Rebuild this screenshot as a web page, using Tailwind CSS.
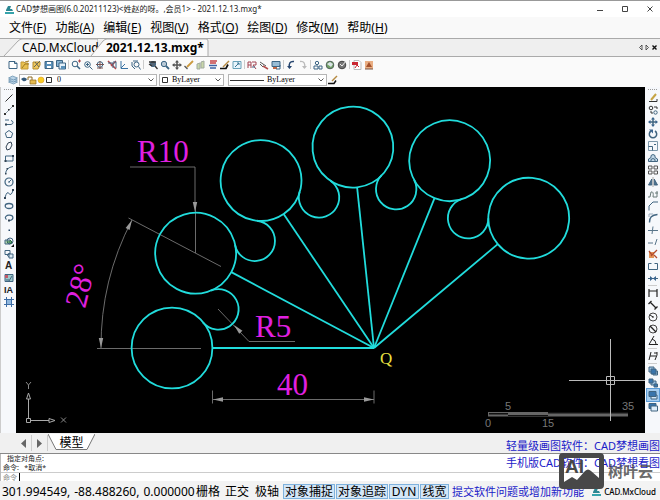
<!DOCTYPE html>
<html lang="zh-CN" class="h-full">
<head>
    <meta charset="UTF-8">
    <meta name="viewport" content="width=device-width, initial-scale=1.0">
    <title>CAD梦想画图</title>
    <script src="https://cdn.jsdelivr.net/npm/@tailwindcss/browser@4"></script>
</head>
<body class="h-full overflow-hidden bg-[#f0f0f0] font-['Noto_Sans','Noto_Sans_CJK_SC',sans-serif] text-black">
<div class="relative flex h-full flex-col">

    <!-- Title bar -->
    <header class="flex h-[17px] shrink-0 items-center border-t border-[#999] bg-white pl-[5px] pr-[4px]">
        <svg class="size-[9px]" viewBox="0 0 9 9"><path d="M1 5 3 1h3L5 4h2l1 2H1z" fill="#2c8792"/><path d="M0 7h9v2H0z" fill="#36a3ab"/></svg>
        <h1 class="ml-[2px] whitespace-nowrap text-[8px] leading-[16px] text-[#222]">CAD梦想画图(6.0.20211123)&lt;姓赵的呀。,会员1&gt; - 2021.12.13.mxg*</h1>
        <div class="ml-auto flex gap-[13px]">
            <button aria-label="最小化" class="size-3"><svg viewBox="0 0 12 12" fill="none" stroke="#444"><path d="M3 7.500h6"/></svg></button>
            <button aria-label="最大化" class="size-3"><svg viewBox="0 0 12 12" fill="none" stroke="#444"><path d="M3.500 3.500h5v5h-5z"/></svg></button>
            <button aria-label="关闭" class="size-3"><svg viewBox="0 0 12 12" fill="none" stroke="#444"><path d="m3.500 3.500 5 5m0-5-5 5"/></svg></button>
        </div>
    </header>

    <!-- Menu -->
    <nav class="flex h-[21px] shrink-0 items-center gap-[9px] bg-[#f9f9f9] pl-[9px] text-[12px] leading-[20px] whitespace-nowrap">
        <button>文件(<u>F</u>)</button>
        <button>功能(<u>A</u>)</button>
        <button>编辑(<u>E</u>)</button>
        <button>视图(<u>V</u>)</button>
        <button>格式(<u>O</u>)</button>
        <button>绘图(<u>D</u>)</button>
        <button>修改(<u>M</u>)</button>
        <button>帮助(<u>H</u>)</button>
    </nav>

    <!-- Document tabs -->
    <div class="flex h-[19px] shrink-0 items-center border-t border-b border-[#aaa] bg-[#efefef]">
        <button class="relative h-[17px] w-[98px] pl-[22px] text-left text-[12px] leading-[18px]">
            <svg class="absolute inset-y-0 left-0 h-full w-full" viewBox="0 0 98 17"><path d="M4 17 18 2q2-2 4-2h76v17" fill="#f5f5f5" stroke="#aaa"/></svg>
            <span class="relative">CAD.MxCloud</span>
        </button>
        <button class="relative h-[17px] w-[111px] pl-[8px] text-left text-[12px] leading-[18px] font-bold whitespace-nowrap">
            <svg class="absolute inset-y-0 -left-2 h-full w-[119px]" viewBox="0 0 119 17"><path d="M1 17 13 2q2-2 4-2h99q2 0 2 2v16" fill="#fafafa" stroke="#aaa"/></svg>
            <span class="relative">2021.12.13.mxg*</span>
        </button>
        <div class="ml-auto flex pr-[2px]">
            <button aria-label="上一个" class="size-[7px]"><svg viewBox="0 0 7 7"><path d="M5 1v5L2.500 3.500z" fill="#eee" stroke="#333" stroke-width=".8"/></svg></button>
            <button aria-label="下一个" class="size-[7px]"><svg viewBox="0 0 7 7"><path d="M2 1v5l2.500-2.500z" fill="#eee" stroke="#333" stroke-width=".8"/></svg></button>
            <button aria-label="关闭图纸" class="size-[7px]"><svg viewBox="0 0 7 7"><path d="m1.500 1.500 4 4m0-4-4 4" stroke="#111" stroke-width="1.400"/></svg></button>
        </div>
    </div>

    <!-- Main toolbar -->
    <div class="flex h-[15px] shrink-0 items-center bg-[#fafafa] pl-[7px] [&_svg]:size-[12px] [&_svg]:fill-none [&_svg]:stroke-[#3c6584] [&>i]:h-[9px] [&>i]:w-px [&>i]:mx-px [&>i]:bg-[#ccc]">
        <button aria-label="新建"><svg viewBox="0 0 12 12"><path d="M2 2.500h6l2 2v5H2z" fill="#fff"/><path d="M7.500 2.500v2H10"/></svg></button>
        <button aria-label="打开"><svg viewBox="0 0 12 12"><path d="M2 3h3l1 1h3v6H2z" fill="#e8c050" stroke="#c39a37"/><path d="m6 3 4-1M3 9l3-4h4" stroke="#9f7b24"/></svg></button>
        <button aria-label="打开最近"><svg viewBox="0 0 12 12"><path d="M2 3h7v3L7 10H2z" fill="#edc75f" stroke="#b48b2c"/><path d="m3 8 6-6M4 3l4 5" stroke="#665"/></svg></button>
        <button aria-label="保存"><svg viewBox="0 0 12 12"><path d="M2 2.500h8v7H2z" fill="#5a91ba"/><path d="M4 3h4v2H4zm0 4h4v2H4z" fill="#fff" stroke="none"/></svg></button>
        <button aria-label="另存为"><svg viewBox="0 0 12 12"><path d="M1.500 1.500h6v6h-6z" fill="#87b3d2"/><path d="M4 4h6.500v6H4z" fill="#e3f0fa"/><path d="M6 7h4v3H6z" fill="#5a91ba" stroke="none"/></svg></button>
        <i></i>
        <button aria-label="窗口缩放"><svg viewBox="0 0 12 12"><circle cx="5" cy="5" r="2.800"/><path d="m7 7 3 3" stroke-width="1.600"/><path d="M8 2h3M9.500.500v3" stroke="#a44"/></svg></button>
        <button aria-label="放大"><svg viewBox="0 0 12 12"><circle cx="5.500" cy="5.500" r="2.800"/><path d="m7.500 7.500 3 3M4 5.500h3M5.500 4v3"/></svg></button>
        <button aria-label="全部缩放"><svg viewBox="0 0 12 12"><circle cx="6" cy="5.500" r="2.800"/><path d="M2 5.500h8M6 2v8M3 9h6" stroke="#755"/></svg></button>
        <button aria-label="范围缩放"><svg viewBox="0 0 12 12"><path d="m2 2 8 8M10 2 5 7" stroke="#b4474b" stroke-width="1.500"/><path d="M2 4h5v5M7 3h3v6"/></svg></button>
        <button aria-label="坐标"><svg viewBox="0 0 12 12"><path d="M3 2v7.500h7M3 9l4-4" stroke="#3972a3"/></svg></button>
        <button aria-label="实时缩放"><svg viewBox="0 0 12 12"><path d="M2 3v4l3 3M3 2h5"/><circle cx="6.500" cy="5.500" r="2.500"/><path d="m8.500 7.500 2 3"/></svg></button>
        <i class="mr-[3px]!"></i>
        <button aria-label="查找"><svg viewBox="0 0 12 12"><circle cx="6" cy="5" r="2.600" fill="#567"/><path d="M2 3h7M8 7l2.500 3M2 5l3 2" stroke="#333" stroke-width="1.300"/></svg></button>
        <button aria-label="缩放"><svg viewBox="0 0 12 12"><circle cx="5" cy="5" r="2.700" fill="#b8c8d5"/><path d="m7 7 3 3" stroke-width="1.800"/></svg></button>
        <button aria-label="平移"><svg viewBox="0 0 12 12"><path d="M6 2v8M2 6h8" stroke="#555" stroke-width="1.500"/><path d="m4 3.500 2-2.500 2 2.500zm0 5L6 11l2-2.500zM3.500 4 1 6l2.500 2zm5 0L11 6 8.500 8z" fill="#555" stroke="none"/></svg></button>
        <button aria-label="画笔"><svg viewBox="0 0 12 12"><path d="m4 8 6-6" stroke="#cc9a3f" stroke-width="1.800"/><path d="m1.500 7 3 3" stroke="#555" stroke-width="1.300"/></svg></button>
        <button aria-label="橡皮"><svg viewBox="0 0 12 12"><path d="m2 5 3-1v6H2zm4-2 3-1v7H6z" fill="#c8d6a9" stroke="#a1aaa0"/></svg></button>
        <button aria-label="图层"><svg viewBox="0 0 12 12"><path d="M3 2h7M3 4h6" stroke="#c44448" stroke-width="1.500"/><path d="M2 6.500h8M3 9h6" stroke="#3c63a5" stroke-width="1.600"/></svg></button>
        <button aria-label="特性匹配"><svg viewBox="0 0 12 12"><path d="m4 8 6-6" stroke="#b58a42" stroke-width="1.500"/><path d="M1 9.500h6l2-4" stroke="#111" stroke-width="1.700"/></svg></button>
        <button aria-label="全屏"><svg viewBox="0 0 12 12"><path d="M2 2.500h8v7H2z" fill="#e8f4fb" stroke="#68a1b8"/><path d="m4 8 4-4M6 4h2v2" stroke="#3a7795"/></svg></button>
        <i></i>
        <button aria-label="文字查找"><svg viewBox="0 0 12 12"><path d="M2 9V3h3v6M2 6h3M6 3h4v3H7l3 4" stroke="#a24250"/><path d="M6 8h3" /></svg></button>
        <button aria-label="删除"><svg viewBox="0 0 12 12"><path d="m2 3 6 4M2 5l3 3" stroke="#555"/><path d="m5 7 5 3" stroke="#b34e4c" stroke-width="1.500"/></svg></button>
        <button aria-label="图片"><svg viewBox="0 0 12 12"><path d="M2 2.500h8v5H2z" fill="#98bcd5"/><path d="M3 8h4v2H3z" fill="#c16743" stroke="none"/><path d="M6 10h4V6"/></svg></button>
        <i></i>
        <button aria-label="撤销"><svg viewBox="0 0 12 12"><path d="M9 2.500C5 2 3.500 4.500 4.500 9" stroke="#27466f" stroke-width="1.500"/><path d="m2 7 2.600 3L7 7z" fill="#27466f" stroke="none"/></svg></button>
        <button aria-label="重做"><svg viewBox="0 0 12 12"><path d="M3 2.500c4-.5 5.500 2 4.500 6.500" stroke="#bbb" stroke-width="1.300"/><path d="M10 7 7.400 10 5 7z" fill="#bbb" stroke="none"/></svg></button>
        <i></i>
        <button aria-label="用户"><svg viewBox="0 0 12 12"><circle cx="5" cy="4" r="1.700"/><path d="M2 10V7h4v3zm5-3h3v3H7z"/></svg></button>
        <button aria-label="云图"><svg viewBox="0 0 12 12"><circle cx="6" cy="6" r="3.800" fill="#73a267" stroke="#52615c"/><path d="m3 5 3-2 3 2-2 3z" fill="#dbe5e8" stroke="none"/></svg></button>
        <button aria-label="设置"><svg viewBox="0 0 12 12"><circle cx="6" cy="6" r="3.800" fill="#777" stroke="#444"/><path d="m4 5 2 2 4-5" stroke="#eee"/></svg></button>
        <i></i>
        <button aria-label="PDF"><svg viewBox="0 0 12 12"><path d="M3 1.500h5l2 2v7H3z" fill="#fff" stroke="#bbb"/><path d="M1 3h6v3H1z" fill="#ca2631" stroke="none"/><path d="m4 9 2-3 2 2" stroke="#ca2631"/></svg></button>
        <button aria-label="导出"><svg viewBox="0 0 12 12"><path d="M2 2h8v8H2z" fill="#e9ae83" stroke="none"/><path d="M3 8h6L6 3z" fill="#a4512b" stroke="none"/><path d="M2 10h8" stroke="#754"/></svg></button>
    </div>

    <!-- Layer and line style -->
    <div class="flex h-[15px] shrink-0 items-center bg-[#fafafa] pl-[7px] font-['Liberation_Serif','Noto_Sans_CJK_SC',serif] text-[8px]">
        <button aria-label="图层管理" class="size-3"><svg viewBox="0 0 12 12" fill="#b9d3e6" stroke="#5d88a8" stroke-width=".7"><path d="m1.500 8 4-2 5 2-4 2z"/><path d="m1.500 6 4-2 5 2-4 2z"/><path d="m1.500 4 4-2 5 2-4 2z"/></svg></button>
        <div class="relative h-[12px] w-[138px] border border-[#b5b5b5] bg-white">
            <svg class="pointer-events-none absolute left-0 top-0 h-[10px] w-[34px]" viewBox="0 0 34 10"><path d="M1 4q3-3 6 0-1 3-4 2z" fill="#34597a"/><path d="M10 5h6v4h-6z" fill="#e6bb4d" stroke="#8e6a20" stroke-width=".7"/><path d="M8 5V2h4v3" fill="none" stroke="#8e6a20"/><circle cx="21" cy="5" r="3" fill="#f9cc24" stroke="#d99a2b" stroke-width=".6"/><path d="M26.500 2.500h5v5h-5z" fill="#fff" stroke="#333"/></svg>
            <select aria-label="图层" class="block h-full w-full appearance-none pl-[37px] leading-[10px]"><option>0</option></select>
            <svg class="pointer-events-none absolute right-[2px] top-[3px] h-[4px] w-[6px]" viewBox="0 0 6 4" fill="none" stroke="#555"><path d="m.500.500 2.500 2.500L5.500.500"/></svg>
        </div>
        <div class="relative ml-[2px] h-[12px] w-[65px] border border-[#b5b5b5] bg-white">
            <svg class="pointer-events-none absolute left-[1px] top-[1px] size-[8px]" viewBox="0 0 8 8"><path d="M1.500 1.500h5v5h-5z" fill="#fff" stroke="#333"/></svg>
            <select aria-label="颜色" class="block h-full w-full appearance-none pl-[12px] leading-[10px]"><option>ByLayer</option></select>
            <svg class="pointer-events-none absolute right-[2px] top-[3px] h-[4px] w-[6px]" viewBox="0 0 6 4" fill="none" stroke="#555"><path d="m.500.500 2.500 2.500L5.500.500"/></svg>
        </div>
        <div class="relative ml-[4px] h-[12px] w-[99px] border border-[#b5b5b5] bg-white">
            <div class="pointer-events-none absolute left-[1px] top-[5px] h-px w-[34px] bg-[#333]"></div>
            <select aria-label="线型" class="block h-full w-full appearance-none pl-[38px] leading-[10px]"><option>ByLayer</option></select>
            <svg class="pointer-events-none absolute right-[2px] top-[3px] h-[4px] w-[6px]" viewBox="0 0 6 4" fill="none" stroke="#555"><path d="m.500.500 2.500 2.500L5.500.500"/></svg>
        </div>
        <button aria-label="线宽" class="size-3"><svg viewBox="0 0 12 12" fill="none"><path d="m5 7 5-5" stroke="#b58a42" stroke-width="1.500"/><path d="M1 9.500h6l2-3" stroke="#111" stroke-width="1.500"/></svg></button>
    </div>

    <main class="flex min-h-0 flex-1">
        <!-- Draw tools -->
        <div class="flex w-[16px] shrink-0 flex-col items-center border-l border-[#ccc] bg-[#f6f8fb] pt-[2px] [&_svg]:size-[12px] [&_svg]:fill-none [&_svg]:stroke-[#416580] [&>button]:size-[12px]">
            <div class="mb-[2px] w-[9px] border-t border-dotted border-[#999]"></div>
            <button aria-label="直线"><svg viewBox="0 0 12 12"><path d="m2.500 9.500 7-7" stroke="#333"/></svg></button>
            <button aria-label="构造线"><svg viewBox="0 0 12 12"><path d="m2 10 8-8" stroke="#8a9aa5"/><path d="M1 9h2v2H1zm8-8h2v2H9zM5 5h1.500v1.500H5z" fill="#333" stroke="none"/></svg></button>
            <button aria-label="多段线"><svg viewBox="0 0 12 12"><path d="M2 4h4M3 8.500h5q2-.5 2-2t-2-2"/><path d="M2 7.500h2v2H2z" fill="#345" stroke="none"/></svg></button>
            <button aria-label="多边形"><svg viewBox="0 0 12 12"><path d="m6 2.500 3.700 2.700L8.300 9.500H3.700L2.300 5.200z"/></svg></button>
            <button aria-label="多边形2"><svg viewBox="0 0 12 12"><path d="m5 3 3-1 1 3-2 4-3 1-1-3z" stroke="#345"/></svg></button>
            <button aria-label="矩形"><svg viewBox="0 0 12 12"><path d="M2.500 4h7.500v5H2.500z"/><path d="M1.500 8h2v2h-2zm7.500-5h2v2H9z" fill="#345" stroke="none"/></svg></button>
            <button aria-label="圆弧"><svg viewBox="0 0 12 12"><path d="M2.500 10Q3 3.500 10 2.500"/><path d="M2 9h1.500v1.500H2zm1.500-5H5v1.500H3.500z" fill="#345" stroke="none"/></svg></button>
            <button aria-label="圆"><svg viewBox="0 0 12 12"><circle cx="6" cy="6" r="4" stroke-width="1.200"/><path d="m6 6 2.500-2.500M5 6h2" /></svg></button>
            <button aria-label="样条"><svg viewBox="0 0 12 12"><path d="M2 9.500q2-7 4-4t4-3"/><path d="M1 9h2v2H1zm8-8h2v2H9z" fill="#345" stroke="none"/></svg></button>
            <button aria-label="椭圆"><svg viewBox="0 0 12 12"><ellipse cx="6" cy="6" rx="3.800" ry="2.500" stroke-width="1.300"/></svg></button>
            <button aria-label="椭圆弧"><svg viewBox="0 0 12 12"><path d="M3.500 7.500C.500 5 4 3 6.500 3.200 11 3.500 11 7.500 7 8.500" stroke-width="1.200"/><path d="M5 7.500h2v2H5z" fill="#345" stroke="none"/></svg></button>
            <button aria-label="点"><svg viewBox="0 0 12 12"><path d="M5.500 5.500h1.500V7H5.500z" fill="#246" stroke="none"/></svg></button>
            <button aria-label="插入块"><svg viewBox="0 0 12 12"><path d="M2 4h5v4H2z" fill="#b6d7b0"/><circle cx="7" cy="5" r="3"/><path d="M4 6h5M7 4l2 2-2 2" stroke="#27743d"/><path d="M11 8v3H8z" fill="#111" stroke="none"/></svg></button>
            <button aria-label="创建块"><svg viewBox="0 0 12 12"><path d="M2 2.500h5v4H2z"/><circle cx="6" cy="7" r="1.500"/><path d="M6 6h4v4H6z" fill="#dbe9f4"/></svg></button>
            <button aria-label="文字"><span class="block font-['Liberation_Sans',sans-serif] text-[10px] leading-[12px] font-bold text-[#222]">A</span></button>
            <button aria-label="填充"><svg viewBox="0 0 12 12"><path d="M2 2.500h8v7H2z" fill="#9cc7ca"/><path d="M2 3h3v3H2z" fill="#c25a68" stroke="none"/><path d="m6 9 3-5M3 8h3"/></svg></button>
            <button aria-label="单行文字"><span class="block font-['Liberation_Sans',sans-serif] text-[9px] leading-[12px] font-bold text-[#222]">IA</span></button>
            <button aria-label="图框"><svg viewBox="0 0 12 12"><path d="M3.500 1v10M8.500 1v10M1 3.500h10M1 8.500h10" stroke="#3d6da5"/><path d="M4 4h4v4H4z" fill="#8fb6dd" stroke="none"/></svg></button>
        </div>

        <!-- Drawing -->
        <div class="min-w-0 flex-1 bg-black">
            <svg class="block h-full w-full font-['Liberation_Serif',serif]" viewBox="16 87 629 346" preserveAspectRatio="xMidYMid meet" fill="none">
                <defs>
                    <g id="spoke">
                        <circle cx="172" cy="348" r="40.400"/>
                        <path d="M212.400 348H374"/>
                    </g>
                    <path id="lobe" d="M202.900 322.300A20.200 20.200 0 1 0 210.900 290.600"/>
                    <path id="arrow" d="M0 0 -2.200 10H2.200z"/>
                </defs>
                <!-- dimension lines -->
                <g stroke="#777" stroke-width=".9">
                    <path d="M130 167h65v35M195.500 202v51"/>
                    <path d="M128.500 218 221 266.500M97 348.500H201"/>
                    <path d="M101 348A273 273 0 0 1 132 220"/>
                    <path d="m218 309 31 32.500h46"/>
                    <path d="M212.500 390.500v13m161.500-13v13M213 399.500h161"/>
                </g>
                <g fill="#999">
                    <use href="#arrow" transform="translate(195 212) rotate(180)"/>
                    <use href="#arrow" transform="translate(132 220) rotate(26)"/>
                    <use href="#arrow" transform="translate(101 348) rotate(180)"/>
                    <use href="#arrow" transform="translate(234 325) rotate(-43)"/>
                    <use href="#arrow" transform="translate(213 399.500) rotate(90) scale(1 -1)"/>
                    <use href="#arrow" transform="translate(374 399.500) rotate(90)"/>
                </g>
                <g stroke="#21dcdc" stroke-width="1.800">
                    <use href="#spoke"/>
                    <use href="#spoke" transform="rotate(28 374 348)"/>
                    <use href="#spoke" transform="rotate(56 374 348)"/>
                    <use href="#spoke" transform="rotate(84 374 348)"/>
                    <use href="#spoke" transform="rotate(112 374 348)"/>
                    <use href="#spoke" transform="rotate(140 374 348)"/>
                    <use href="#lobe"/>
                    <use href="#lobe" transform="rotate(28 374 348)"/>
                    <use href="#lobe" transform="rotate(56 374 348)"/>
                    <use href="#lobe" transform="rotate(84 374 348)"/>
                    <use href="#lobe" transform="rotate(112 374 348)"/>
                </g>
                <g fill="#e020e0" font-size="31">
                    <text x="137" y="162">R10</text>
                    <text x="255" y="337">R5</text>
                    <text x="277" y="395">40</text>
                    <text transform="translate(85 309) rotate(-76)">28°</text>
                </g>
                <text x="380" y="364" fill="#e8e040" font-size="17">Q</text>
                <!-- axes -->
                <g stroke="#aaa">
                    <path d="M28.500 418v-19M31 420.500h18M26.500 418.500h4v4h-4z"/>
                    <path d="m26.500 399 2-6 2 6zM49 418.500l6 2-6 2z"/>
                    <path d="m26 382 2.500 3 2.500-3m-2.500 3v4M61 417.500l5 5m0-5-5 5" stroke="#888"/>
                </g>
                <!-- scale bar -->
                <g fill="#777">
                    <path d="M488 412h140v4.500H488z" fill="#666"/>
                    <path d="M489 413h19v1.500h-19zM508 415h40v1h-40zM548 412h80v1.500h-80z" fill="#111"/>
                    <g class="font-['Liberation_Sans',sans-serif]" font-size="11">
                        <text x="505" y="410">5</text>
                        <text x="622" y="410">35</text>
                        <text x="485" y="427">0</text>
                        <text x="542" y="427">15</text>
                    </g>
                </g>
                <!-- cursor -->
                <path d="M569 380.500h76M610.500 339v82M606.500 376.500h8v8h-8z" stroke="#bbb"/>
            </svg>
        </div>

        <!-- Modify tools -->
        <div class="flex w-[15px] shrink-0 flex-col items-center bg-[#f6f8fb] pt-[2px] [&_svg]:size-[12px] [&_svg]:fill-none [&_svg]:stroke-[#416580] [&>button]:size-[12px] [&>hr]:my-px [&>hr]:w-[9px] [&>hr]:border-[#ccc]">
            <div class="mb-[2px] w-[9px] border-t border-dotted border-[#999]"></div>
            <button aria-label="擦除"><svg viewBox="0 0 12 12"><path d="m4 8 5-6" stroke="#c6a444" stroke-width="2"/><path d="M2 9.500h8V7" stroke="#333"/></svg></button>
            <button aria-label="复制"><svg viewBox="0 0 12 12"><circle cx="4" cy="4" r="1.800" stroke="#333"/><circle cx="8.500" cy="8.500" r="1.700"/><path d="M7 3h3v2M4 7v2h2" stroke="#333"/></svg></button>
            <button aria-label="移动"><svg viewBox="0 0 12 12"><path d="M6 2v8M2 6h8" stroke-width="1.500"/><path d="m4 3.500 2-2.500 2 2.500zm0 5L6 11l2-2.500zM3.500 4 1 6l2.500 2zm5 0L11 6 8.500 8z" fill="#3a648e" stroke="none"/></svg></button>
            <button aria-label="旋转"><svg viewBox="0 0 12 12"><path d="M4 3a3.700 3.700 0 1 0 4 0" stroke-width="1.500"/><path d="M2 1.500h4v4z" fill="#3a648e" stroke="none"/></svg></button>
            <button aria-label="缩放图形"><svg viewBox="0 0 12 12"><path d="M1.500 1.500h9v9h-9z" stroke="#7d98aa"/><path d="M1.500 6.500h4v4M7 4.500h2"/></svg></button>
            <button aria-label="偏移"><svg viewBox="0 0 12 12"><path d="M1.500 9.500V7L4 5.500V3.500q2-2 4 0v2L10.500 7v2.500z" fill="#c3d9e8"/><path d="M4 9V7.500q2-2 4 0V9"/></svg></button>
            <button aria-label="阵列"><svg viewBox="0 0 12 12"><path d="M1.500 2h3.500v3H1.500zm5.500 0h3.500v3H7zM1.500 7h3.500v3H1.500zM7 7h3.500v3H7z" stroke="#555"/></svg></button>
            <button aria-label="镜像"><svg viewBox="0 0 12 12"><path d="M4.800 3v6H1.500zm2.400 0v6h3.300z" fill="#49708e"/><path d="M6 1v10" stroke="#aaa"/></svg></button>
            <button aria-label="拉伸"><svg viewBox="0 0 12 12"><path d="M1 9h2l1-5q3-1 2 5h4V3M8 5h3" stroke="#697b78"/></svg></button>
            <button aria-label="倒角"><svg viewBox="0 0 12 12"><path d="M2 10.500V6l4-4h5M3 5l3-3"/></svg></button>
            <button aria-label="圆角"><svg viewBox="0 0 12 12"><path d="M2.500 10.500Q2 3 10.500 2.500" stroke-width="1.400"/><path d="M2 5V2h4" stroke="#9ab"/></svg></button>
            <button aria-label="修剪"><svg viewBox="0 0 12 12"><path d="M1 6.500h10M6 2.500 5 10" stroke="#58758a"/></svg></button>
            <button aria-label="延伸"><svg viewBox="0 0 12 12"><path d="M1 7h5m4-4L8 9" stroke="#58758a"/></svg></button>
            <button aria-label="分解"><svg viewBox="0 0 12 12"><path d="M2 4h5v6H2z" fill="#e49457" stroke="none"/><path d="m4 8 6-6M2 3l3 4m2 0 3 3" stroke="#b24b2e" stroke-width="1.300"/></svg></button>
            <button aria-label="打断"><svg viewBox="0 0 12 12"><path d="M4.500 3.500h-3v6h9v-6h-3"/></svg></button>
            <button aria-label="合并"><svg viewBox="0 0 12 12"><path d="M1 6.500h10" /><path d="m3 4 3 2.500L3 9zm6 0L6 6.500 9 9z" fill="#3a648e" stroke="none"/></svg></button>
            <hr>
            <button aria-label="线性标注"><svg viewBox="0 0 12 12"><path d="M2 2v8m8-8v8M2 4h8" stroke="#222" stroke-width="1.200"/></svg></button>
            <button aria-label="对齐标注"><svg viewBox="0 0 12 12"><path d="m3 3 6 6M1.500 5l3-3m3 8.500 3-3" stroke="#222" stroke-width="1.300"/></svg></button>
            <button aria-label="半径标注"><svg viewBox="0 0 12 12"><circle cx="6" cy="6" r="4" stroke="#444"/><path d="M6 6 3 4m3 1v2" stroke="#222"/></svg></button>
            <button aria-label="直径标注"><svg viewBox="0 0 12 12"><circle cx="6" cy="6" r="4" stroke="#444"/><path d="m3 3 6 6M5 5l2 2" stroke="#222" stroke-width="1.300"/></svg></button>
            <button aria-label="角度标注"><svg viewBox="0 0 12 12"><path d="M7 1 2 9.500h9M5 4q4 1 4 5" stroke="#222"/></svg></button>
            <hr>
            <button aria-label="连续标注"><svg viewBox="0 0 12 12"><path d="M4 2 2 10m8-8v3L8 10M3 6h6M7 3h3" stroke="#222"/></svg></button>
            <hr>
            <button aria-label="前置"><svg viewBox="0 0 12 12"><path d="M2 2h5v5H2z" fill="#9cc3e4"/><path d="M6 6h4.500v4H6z" fill="#9cc3e4"/><path d="M4 4h5v5H4z" fill="#3975ac"/></svg></button>
            <button aria-label="后置"><svg viewBox="0 0 12 12"><path d="M4 4h5v4H4z" fill="#9cc3e4"/><path d="M2 2h4v4H2zm5 5h3.500v3H7z" fill="#3975ac"/></svg></button>
            <button aria-label="上移" aria-pressed="true" class="bg-[#a5cdf0] outline outline-[#5b9bd5]"><svg viewBox="0 0 12 12"><path d="M4 6h6v4H4z" fill="#d7e9f7"/><path d="M2 2.500h7v5H2z" fill="#3975ac"/></svg></button>
            <button aria-label="下移"><svg viewBox="0 0 12 12"><path d="M2 2.500h7v5H2z" fill="#3975ac"/><path d="M4 5h6.500v5H4z" fill="#dfeefa"/></svg></button>
        </div>
    </main>

    <!-- Model tab -->
    <div class="flex h-[20px] shrink-0 items-center pl-[16px]">
        <button aria-label="向左" class="h-[16px] w-[16px] border-r border-[#ccc]"><svg class="mx-auto size-[9px]" viewBox="0 0 9 9"><path d="M7 0v9L2 4.500z" fill="#666"/></svg></button>
        <button aria-label="向右" class="h-[16px] w-[16px] border-r border-[#ccc]"><svg class="mx-auto size-[9px]" viewBox="0 0 9 9"><path d="M2 0v9l5-4.500z" fill="#666"/></svg></button>
        <button class="relative h-[18px] w-[47px] text-[12px] leading-[16px]">
            <svg class="absolute inset-0 h-full w-full" viewBox="0 0 47 18"><path d="m0 0 8 15.500h31L47 0" fill="#fff" stroke="#777"/></svg>
            <span class="relative">模型</span>
        </button>
        <a href="#" class="ml-auto pt-[5px] text-[11px] leading-[15px] whitespace-nowrap text-[#1a1ac8]">轻量级画图软件：CAD梦想画图</a>
    </div>

    <!-- Command line -->
    <div class="flex h-[28px] shrink-0 border-t border-[#888] bg-white">
        <div class="flex flex-1 flex-col border-l border-[#bbb] text-[7px] leading-[9px] text-[#222]">
            <p class="pl-[6px]">指定对角点:</p>
            <p class="pl-[2px] whitespace-pre">命令:   *取消*</p>
            <label class="flex border-t border-[#ccc] pl-[2px] text-[#888]">命令<input aria-label="命令" class="ml-[2px] h-[8px] w-[200px] border-l border-black leading-[8px] outline-none"></label>
        </div>
        <a href="#" class="h-[19px] border-b border-[#ccc] pt-[1px] text-[11px] leading-[16px] whitespace-nowrap text-[#1a1ac8]">手机版CAD软件：CAD梦想看图</a>
    </div>

    <!-- Status bar -->
    <footer class="flex h-[19px] shrink-0 items-center bg-[#f3f3f3] pl-[2px] pt-[2px] text-[12px] leading-[16px] whitespace-nowrap">
        <div class="flex w-[194px] shrink-0 gap-[4px]"><span>301.994549,</span><span>-88.488260,</span><span>0.000000</span></div>
        <button class="w-[29px] shrink-0 text-left">栅格</button>
        <button class="w-[30px] shrink-0 text-left">正交</button>
        <button class="w-[28px] shrink-0 text-left">极轴</button>
        <div class="flex shrink-0 gap-px [&>button]:h-[15px] [&>button]:border [&>button]:border-[#7fb2dd] [&>button]:bg-[#d3e6f7] [&>button]:leading-[13px]">
            <button aria-pressed="true" class="w-[52px]">对象捕捉</button>
            <button aria-pressed="true" class="w-[52px]">对象追踪</button>
            <button aria-pressed="true" class="w-[30px]">DYN</button>
            <button aria-pressed="true" class="w-[29px]">线宽</button>
        </div>
        <a href="#" class="ml-[3px] text-[11px] text-[#1a1ac8]">提交软件问题或增加新功能</a>
        <div class="ml-auto flex items-center gap-[3px] pr-[4px]">
            <svg class="size-[9px]" viewBox="0 0 9 9"><path d="M1 5 3 1h3L5 4h2l1 2H1z" fill="#2c8792"/><path d="M0 7h9v2H0z" fill="#36a3ab"/></svg>
            <span class="text-[8px] font-medium">CAD.MxCloud</span>
        </div>
    </footer>

    <!-- Watermark -->
    <div class="pointer-events-none absolute right-[7px] bottom-[11px] flex items-center gap-[4px] text-[#444]/80">
        <svg class="h-[36px] w-[45px]" viewBox="0 0 45 36"><path fill-rule="evenodd" d="M4 0h37q4 0 4 4v28q0 4-4 4H4q-4 0-4-4V4q0-4 4-4zm1 5v24l8-5 5 3 8-9q3-3 6 0l8 7V5z" fill="#484848"/><text x="6" y="20" fill="#484848" font-size="19" font-weight="700" font-family="Liberation Sans">AI</text></svg>
        <span class="text-[15px] leading-[20px] font-bold">树叶云</span>
    </div>
</div>
</body>
</html>
